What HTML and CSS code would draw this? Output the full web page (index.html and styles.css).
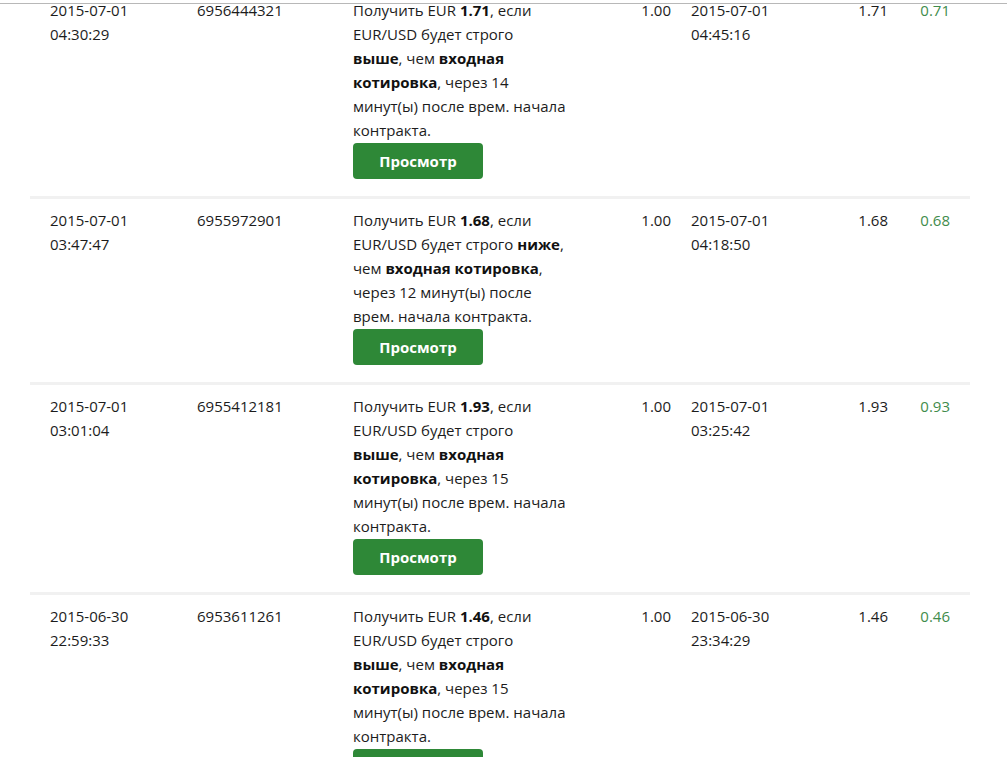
FILE: index.html
```html
<!DOCTYPE html>
<html lang="ru">
<head>
<meta charset="utf-8">
<link rel="stylesheet" href="styles.css">
</head>
<body>
<div class="topline"></div>
<div class="table">
  <div class="row">
    <div class="cell">2015-07-01<br>04:30:29</div>
    <div class="cell">6956444321</div>
    <div class="cell desc">
      <p>Получить EUR <b>1.71</b>, если<br>EUR/USD будет строго<br><b>выше</b>, чем <b>входная</b><br><b>котировка</b>, через 14<br>минут(ы) после врем. начала<br>контракта.</p>
      <button class="btn">Просмотр</button>
    </div>
    <div class="cell num">1.00</div>
    <div class="cell sell">2015-07-01<br>04:45:16</div>
    <div class="cell num">1.71</div>
    <div class="cell num profit">0.71</div>
  </div>
  <div class="row">
    <div class="cell">2015-07-01<br>03:47:47</div>
    <div class="cell">6955972901</div>
    <div class="cell desc">
      <p>Получить EUR <b>1.68</b>, если<br>EUR/USD будет строго <b>ниже</b>,<br>чем <b>входная котировка</b>,<br>через 12 минут(ы) после<br>врем. начала контракта.</p>
      <button class="btn">Просмотр</button>
    </div>
    <div class="cell num">1.00</div>
    <div class="cell sell">2015-07-01<br>04:18:50</div>
    <div class="cell num">1.68</div>
    <div class="cell num profit">0.68</div>
  </div>
  <div class="row">
    <div class="cell">2015-07-01<br>03:01:04</div>
    <div class="cell">6955412181</div>
    <div class="cell desc">
      <p>Получить EUR <b>1.93</b>, если<br>EUR/USD будет строго<br><b>выше</b>, чем <b>входная</b><br><b>котировка</b>, через 15<br>минут(ы) после врем. начала<br>контракта.</p>
      <button class="btn">Просмотр</button>
    </div>
    <div class="cell num">1.00</div>
    <div class="cell sell">2015-07-01<br>03:25:42</div>
    <div class="cell num">1.93</div>
    <div class="cell num profit">0.93</div>
  </div>
  <div class="row">
    <div class="cell">2015-06-30<br>22:59:33</div>
    <div class="cell">6953611261</div>
    <div class="cell desc">
      <p>Получить EUR <b>1.46</b>, если<br>EUR/USD будет строго<br><b>выше</b>, чем <b>входная</b><br><b>котировка</b>, через 15<br>минут(ы) после врем. начала<br>контракта.</p>
      <button class="btn">Просмотр</button>
    </div>
    <div class="cell num">1.00</div>
    <div class="cell sell">2015-06-30<br>23:34:29</div>
    <div class="cell num">1.46</div>
    <div class="cell num profit">0.46</div>
  </div>
</div>
</body>
</html>
```

FILE: styles.css
```css
html, body {
  margin: 0;
  padding: 0;
  background: #ffffff;
  overflow: hidden;
}
body {
  font-family: "Open Sans", "Noto Sans", sans-serif;
  font-size: 15px;
  line-height: 24px;
  color: #1c1c1c;
}
.topline {
  position: fixed;
  top: 3px;
  left: 0;
  right: 0;
  height: 1px;
  background: #b8b8b8;
  z-index: 5;
}
.table {
  margin: -14px 0 0 30px;
  width: 940px;
}
.row {
  display: grid;
  grid-template-columns: 147px 156px 218px 100px 150px 67px 62px;
  padding: 9px 20px 17px 20px;
  border-top: 3px solid #f1f1f1;
}
.cell {
  white-space: nowrap;
}
.desc p {
  margin: 0 0 1px 0;
}
.desc b {
  font-weight: 700;
  color: #111;
}
.num {
  text-align: right;
}
.sell {
  padding-left: 20px;
}
.profit {
  color: #3f8c4c;
}
.btn {
  display: block;
  width: 130px;
  height: 36px;
  border: 0;
  border-radius: 4px;
  background: #2e8837;
  color: #ffffff;
  font-family: "Open Sans", "Noto Sans", sans-serif;
  font-size: 15px;
  font-weight: 700;
  padding: 0;
  cursor: pointer;
}
```
